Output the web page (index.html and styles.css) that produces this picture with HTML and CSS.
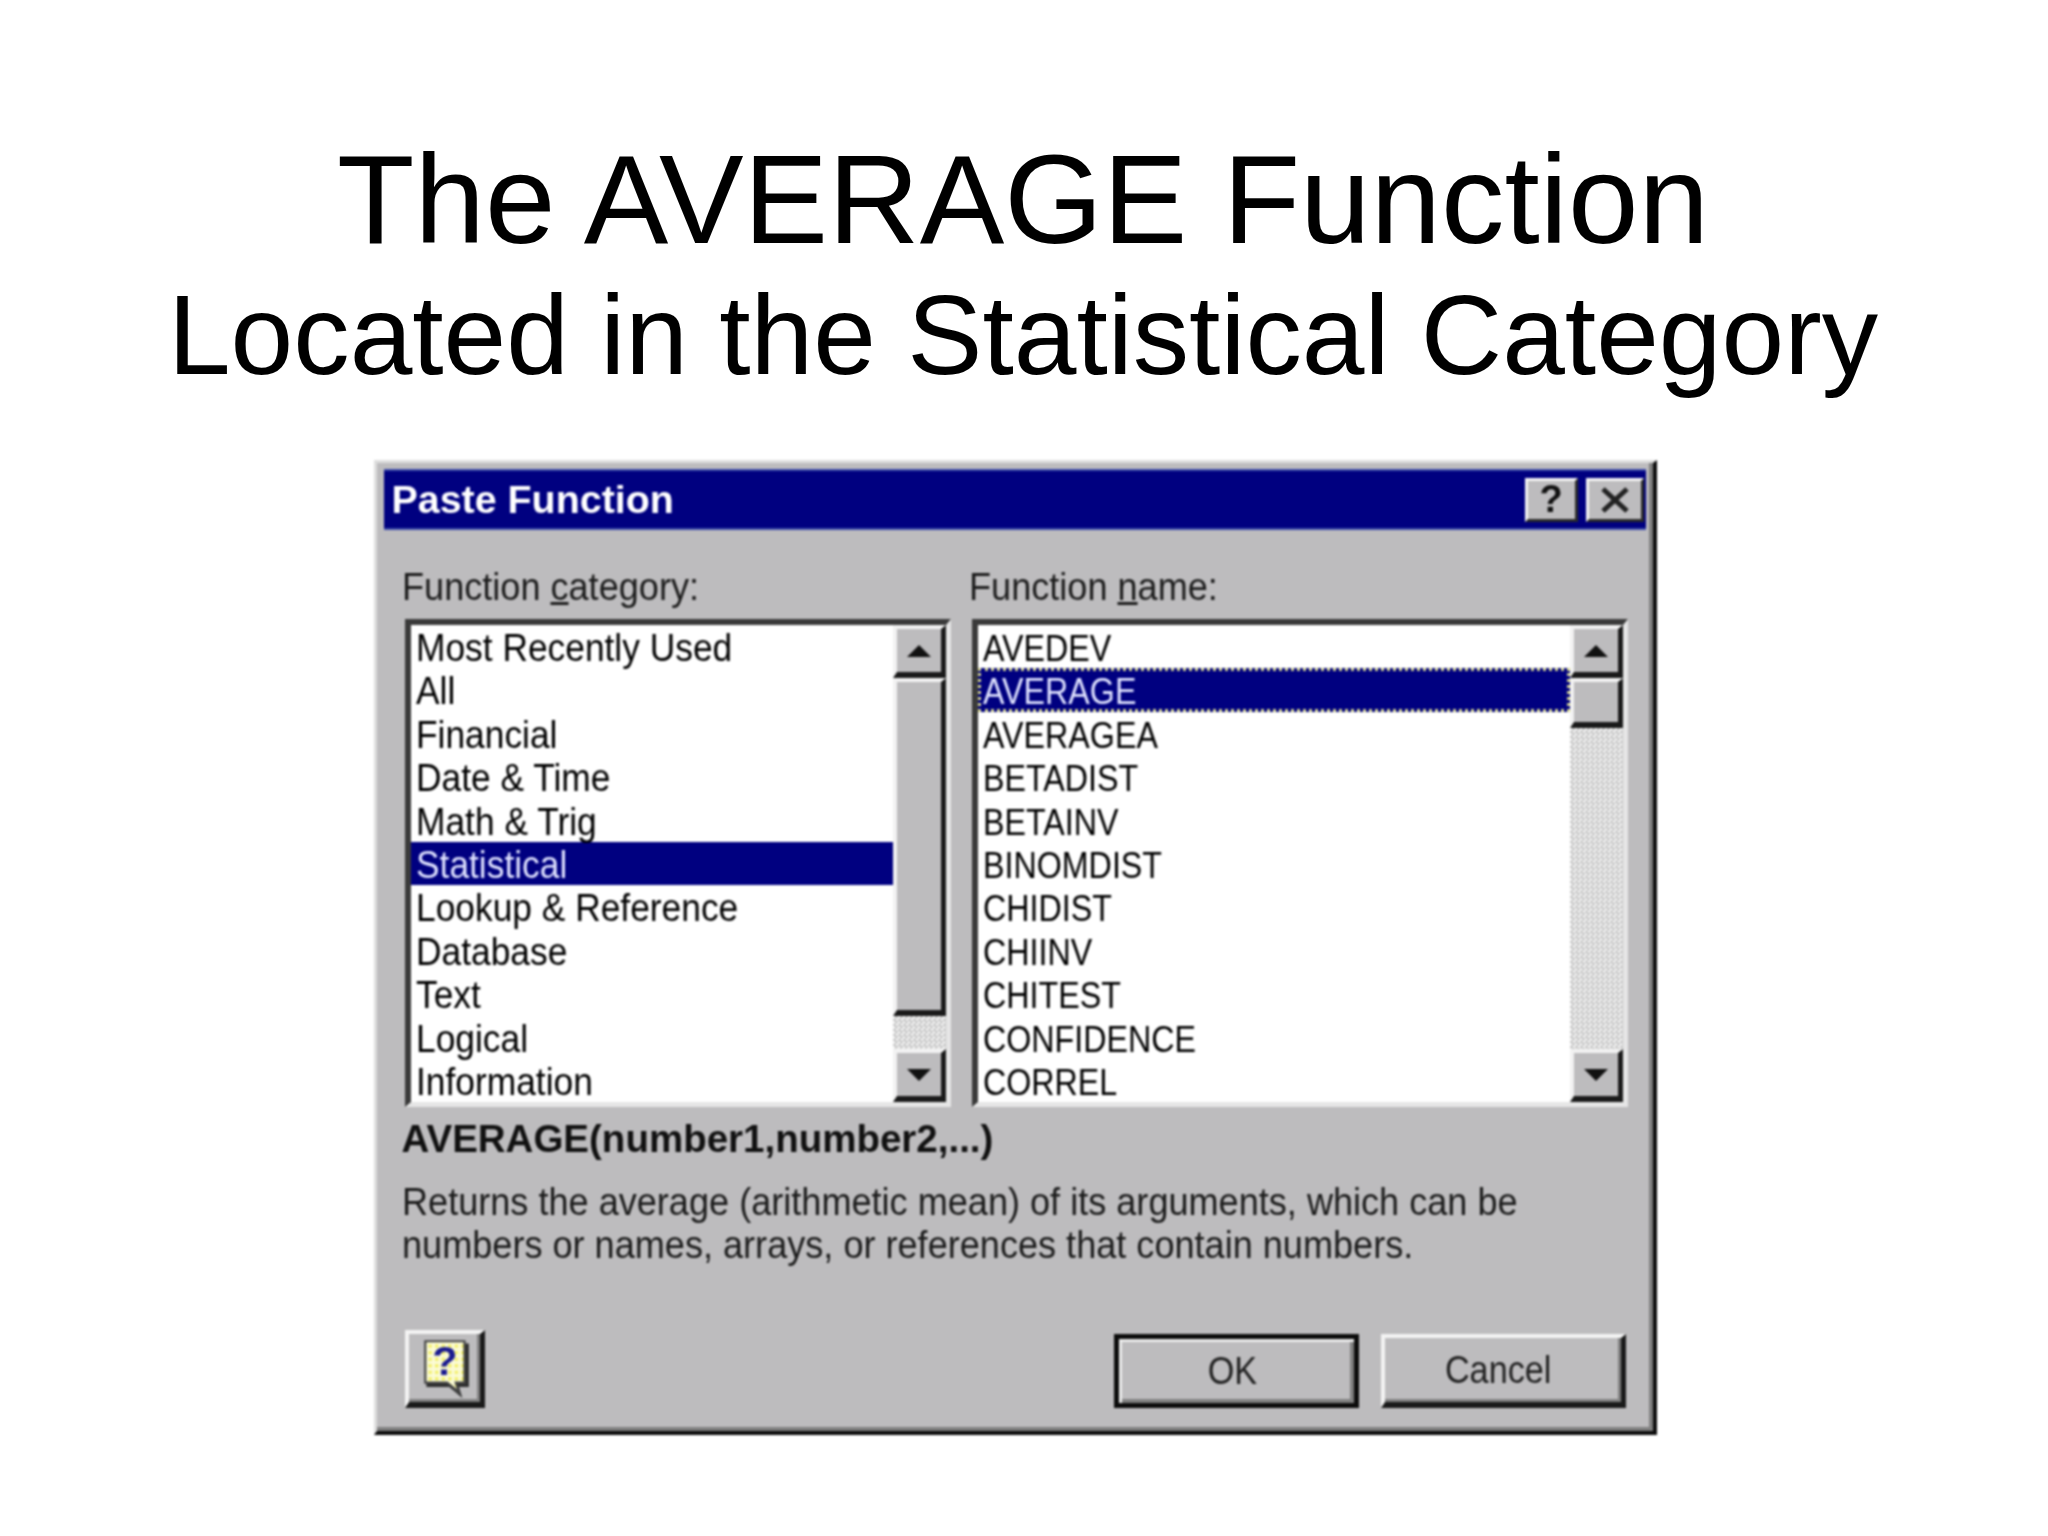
FILE: index.html
```html
<!DOCTYPE html>
<html lang="en">
<head>
<meta charset="utf-8">
<title>The AVERAGE Function</title>
<link rel="stylesheet" href="styles.css">
</head>
<body>
<main class="slide">
  <h1 class="heading">
    <span class="heading-main">The AVERAGE Function</span>
    <span class="heading-sub">Located in the Statistical Category</span>
  </h1>
  <section class="dialog">
    <header class="titlebar">
      <span class="titlebar-text">Paste Function</span>
      <div class="titlebar-buttons">
        <span class="cap-btn cap-help">?</span>
        <span class="cap-btn cap-close">
          <svg class="cap-x" viewBox="0 0 30 26"><path d="M3 2 L27 24 M27 2 L3 24"/></svg>
        </span>
      </div>
    </header>
    <div class="body">
      <div class="columns">
        <div class="col col-left">
          <label class="field-label">Function <u>c</u>ategory:</label>
          <div class="listbox">
            <ul class="rows rows-mixed">
              <li><span>Most Recently Used</span></li>
              <li><span>All</span></li>
              <li><span>Financial</span></li>
              <li><span>Date &amp; Time</span></li>
              <li><span>Math &amp; Trig</span></li>
              <li class="selected"><span>Statistical</span></li>
              <li><span>Lookup &amp; Reference</span></li>
              <li><span>Database</span></li>
              <li><span>Text</span></li>
              <li><span>Logical</span></li>
              <li><span>Information</span></li>
            </ul>
            <div class="scrollbar">
              <span class="sb-btn"><svg class="arrow" viewBox="0 0 24 12"><path d="M12 0 L24 12 L0 12 Z"/></svg></span>
              <span class="sb-thumb sb-thumb-long"></span>
              <span class="sb-track"></span>
              <span class="sb-btn"><svg class="arrow" viewBox="0 0 24 12"><path d="M0 0 L24 0 L12 12 Z"/></svg></span>
            </div>
          </div>
        </div>
        <div class="col col-right">
          <label class="field-label">Function <u>n</u>ame:</label>
          <div class="listbox">
            <ul class="rows rows-caps">
              <li><span>AVEDEV</span></li>
              <li class="selected focused"><span>AVERAGE</span></li>
              <li><span>AVERAGEA</span></li>
              <li><span>BETADIST</span></li>
              <li><span>BETAINV</span></li>
              <li><span>BINOMDIST</span></li>
              <li><span>CHIDIST</span></li>
              <li><span>CHIINV</span></li>
              <li><span>CHITEST</span></li>
              <li><span>CONFIDENCE</span></li>
              <li><span>CORREL</span></li>
            </ul>
            <div class="scrollbar">
              <span class="sb-btn"><svg class="arrow" viewBox="0 0 24 12"><path d="M12 0 L24 12 L0 12 Z"/></svg></span>
              <span class="sb-thumb sb-thumb-short"></span>
              <span class="sb-track"></span>
              <span class="sb-btn"><svg class="arrow" viewBox="0 0 24 12"><path d="M0 0 L24 0 L12 12 Z"/></svg></span>
            </div>
          </div>
        </div>
      </div>
      <p class="signature">AVERAGE(number1,number2,...)</p>
      <p class="description">Returns the average (arithmetic mean) of its arguments, which can be<br>numbers or names, arrays, or references that contain numbers.</p>
      <footer class="footer">
        <button class="btn btn-help" type="button">
          <svg class="help-icon" viewBox="0 0 44 56">
            <defs>
              <pattern id="dots" width="6" height="6" patternUnits="userSpaceOnUse">
                <rect width="6" height="6" fill="#fbfbd8"/>
                <rect width="3" height="3" fill="#f2ef60"/>
              </pattern>
            </defs>
            <path class="bubble-shadow" d="M4 5 H43 V45 H34 L37 55 L25 45 H4 Z"/>
            <path class="bubble" d="M3 3 H39 V41 H31 L34 50 L23 41 H3 Z"/>
            <text class="bubble-mark" x="21" y="34">?</text>
          </svg>
        </button>
        <div class="footer-actions">
          <button class="btn btn-default" type="button"><span>OK</span></button>
          <button class="btn" type="button"><span>Cancel</span></button>
        </div>
      </footer>
    </div>
  </section>
</main>
</body>
</html>
```
FILE: styles.css
```css
* { box-sizing: border-box; }

html, body {
  margin: 0;
  padding: 0;
  background: #fff;
}

.slide {
  width: 2048px;
  height: 1536px;
  display: flex;
  flex-direction: column;
  align-items: center;
  overflow: hidden;
  font-family: "Liberation Sans", Arial, sans-serif;
  color: #000;
}

.heading {
  margin: 0 0 0 -2px;
  padding-top: 129px;
  height: 460px;
  font-weight: 400;
  text-align: center;
}

.heading-main {
  display: block;
  font-size: 126.8px;
  line-height: 140px;
}

.heading-sub {
  display: block;
  font-size: 112.7px;
  line-height: 132px;
}

.dialog {
  width: 1283px;
  height: 975px;
  margin-left: -18px;
  padding: 10px 10px 9px 9px;
  background: #bdbcbe;
  border-style: solid;
  border-width: 3px 4px 4px 3px;
  border-color: #dedede #0c0c0c #0c0c0c #dedede;
  box-shadow: inset -4px -4px 0 #808080;
  filter: blur(0.8px);
  font-family: "Liberation Sans", Arial, sans-serif;
  color: #1c1c1c;
}

.titlebar {
  height: 61px;
  margin: -4px -3px 0 -2px;
  padding: 0 2px 0 8px;
  display: flex;
  align-items: center;
  justify-content: space-between;
  background: #000080;
  border-top: 2px solid #3c4aa8;
  border-bottom: 2px solid #3c4aa8;
}

.titlebar-text {
  color: #fff;
  font-size: 39.4px;
  font-weight: 700;
}

.titlebar-buttons {
  display: flex;
  gap: 8px;
}

.cap-btn {
  height: 44px;
  display: flex;
  align-items: center;
  justify-content: center;
  background: #bdbcbe;
  border-style: solid;
  border-width: 3px;
  border-color: #f4f4f4 #2a2a2a #2a2a2a #f4f4f4;
  color: #111;
  font-size: 38px;
  font-weight: 700;
}

.cap-help { width: 53px; }
.cap-close { width: 58px; }

.cap-x {
  width: 30px;
  height: 26px;
  fill: none;
  stroke: #222;
  stroke-width: 5;
}

.body {
  padding: 36px 15px 0 19px;
}

.columns {
  display: grid;
  grid-template-columns: 546px 656px;
  column-gap: 21px;
}

.field-label {
  display: block;
  height: 43px;
  line-height: 43px;
  margin-bottom: 10px;
  margin-left: -3px;
  font-size: 38px;
  white-space: nowrap;
  transform: scaleX(0.95);
  transform-origin: 0 50%;
}

.listbox {
  height: 488px;
  display: flex;
  background: #fff;
  border-style: solid;
  border-width: 6px 5px 5px 6px;
  border-color: #3a3a3a #e6e6e6 #e6e6e6 #3a3a3a;
  overflow: hidden;
}

.rows {
  flex: 1;
  min-width: 0;
  margin: 0;
  padding: 0;
  list-style: none;
  color: #000;
}

.rows-mixed { font-size: 38px; }
.rows-caps { font-size: 36px; }

.rows li {
  height: 43.4px;
  line-height: 43.4px;
  padding: 2px 0 0 5px;
  white-space: nowrap;
}

.rows span {
  display: inline-block;
  transform-origin: 0 50%;
}

.rows-mixed span { transform: scaleX(0.93); }
.rows-caps span { transform: scaleX(0.895); }

.rows .selected {
  background: #000080;
  color: #dfe2ff;
}

.rows .focused {
  outline: 3px dotted #d8d890;
  outline-offset: -3px;
}

.scrollbar {
  width: 53px;
  flex: none;
  display: flex;
  flex-direction: column;
}

.sb-btn,
.sb-thumb {
  background: #bdbcbe;
  border-style: solid;
  border-width: 4px 5px 6px 4px;
  border-color: #f2f2f2 #1a1a1a #1a1a1a #f2f2f2;
}

.sb-btn {
  height: 53px;
  flex: none;
  display: flex;
  align-items: center;
  justify-content: center;
}

.sb-thumb-long { height: 338px; flex: none; }
.sb-thumb-short { height: 50px; flex: none; }

.sb-track {
  flex: 1;
  background: repeating-conic-gradient(#c4c4c4 0 25%, #f4f4f4 0 50%) 0 0 / 5px 5px;
}

.arrow {
  width: 24px;
  height: 12px;
  fill: #111;
}

.signature {
  margin: 10px 0 0 -3px;
  height: 43px;
  line-height: 43px;
  font-size: 38.5px;
  font-weight: 700;
  color: #111;
}

.description {
  margin: 21px 0 0 -3px;
  height: 86px;
  line-height: 43px;
  font-size: 38px;
  color: #1c1c1c;
  white-space: nowrap;
  transform: scaleX(0.95);
  transform-origin: 0 50%;
}

.footer {
  margin: 63px 2px 0 0;
  height: 78px;
  display: flex;
  justify-content: space-between;
  align-items: flex-end;
}

.footer-actions {
  display: flex;
  gap: 22px;
}

.btn {
  width: 245px;
  height: 74px;
  padding: 0 8px 0 0;
  background: #bdbcbe;
  border-style: solid;
  border-width: 4px 5px 6px 4px;
  border-color: #f4f4f4 #1a1a1a #1a1a1a #f4f4f4;
  box-shadow: inset -3px -3px 0 #808080;
  font: inherit;
  font-size: 38px;
  color: #222;
}

.btn span {
  display: inline-block;
  transform: scaleX(0.9);
}

.btn-default {
  border: 5px solid #0c0c0c;
  box-shadow: inset 3px 3px 0 #ececec, inset -4px -4px 0 #808080;
}

.btn-help {
  width: 80px;
  height: 78px;
  padding: 0 0 0 4px;
  display: flex;
  align-items: center;
  justify-content: center;
}

.help-icon {
  width: 48px;
  height: 61px;
}

.bubble-shadow { fill: #2e2e2e; }

.bubble {
  fill: url(#dots);
  stroke: #444;
  stroke-width: 2;
}

.bubble-mark {
  font-size: 38px;
  font-weight: 700;
  fill: #1a1a90;
  text-anchor: middle;
}
```
